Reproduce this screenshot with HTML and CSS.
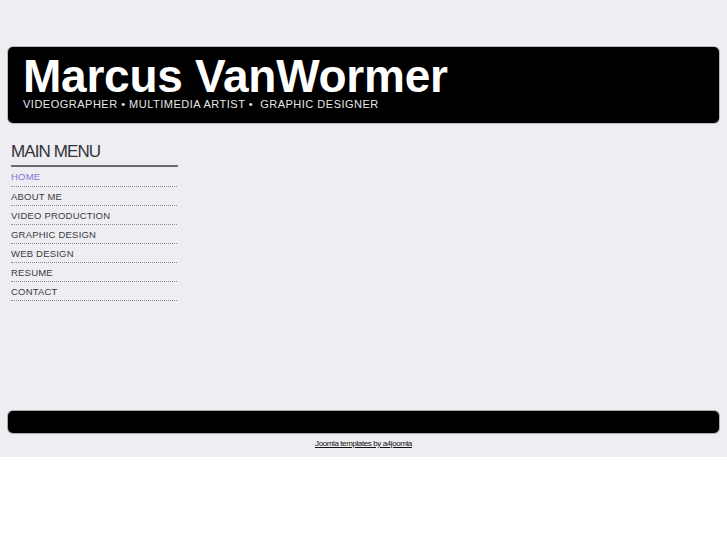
FILE: index.html
```html
<!DOCTYPE html>
<html>
<head>
<meta charset="utf-8">
<link rel="stylesheet" href="styles.css">
</head>
<body>
<div class="page">
  <header class="masthead">
    <h1 class="title">Marcus VanWormer</h1>
    <div class="tagline">VIDEOGRAPHER • MULTIMEDIA ARTIST •&nbsp; GRAPHIC DESIGNER</div>
  </header>
  <main class="main">
    <nav class="menu">
      <h3 class="menu-title">MAIN MENU</h3>
      <ul class="menu-list">
        <li><a class="active" href="#">HOME</a></li>
        <li><a href="#">ABOUT ME</a></li>
        <li><a href="#">VIDEO PRODUCTION</a></li>
        <li><a href="#">GRAPHIC DESIGN</a></li>
        <li><a href="#">WEB DESIGN</a></li>
        <li><a href="#">RESUME</a></li>
        <li><a href="#">CONTACT</a></li>
      </ul>
    </nav>
  </main>
  <footer class="footbar"></footer>
  <div class="credit"><a href="#">Joomla templates by a4joomla</a></div>
</div>
</body>
</html>
```
FILE: styles.css
```css
html, body { margin: 0; padding: 0; background: #ffffff; }
body { font-family: "Liberation Sans", Arial, sans-serif; }
.page {
  background: #eeedf2;
  padding: 47px 8px 0;
  height: 410px;
}
.masthead {
  background: #000;
  border-radius: 5px;
  height: 76px;
  box-sizing: border-box;
  padding: 9px 0 0 15px;
  box-shadow: 0 0 0 1px #b9b9be;
}
.title {
  margin: 0;
  color: #fff;
  font-size: 46px;
  line-height: 40px;
  font-weight: bold;
  letter-spacing: -0.25px;
}
.tagline {
  color: #e6e6e6;
  font-size: 11px;
  line-height: 13px;
  letter-spacing: 0.5px;
  margin-top: 2px;
  white-space: nowrap;
}
.main {
  height: 288px;
  padding-left: 3px;
}
.menu { width: 167px; padding-top: 19px; }
.menu-title {
  margin: 0;
  font-size: 17px;
  font-weight: normal;
  color: #333338;
  letter-spacing: -0.9px;
  line-height: 20px;
  padding-bottom: 3px;
  border-bottom: 2px solid #6b6b70;
}
.menu-list { list-style: none; margin: 0; padding: 0; width: 166px; }
.menu-list li { border-bottom: 1px dotted #8c8c90; height: 18px; }
.menu-list li:first-child { height: 19px; }
.menu-list a {
  display: block;
  font-size: 9.5px;
  letter-spacing: 0.2px;
  color: #3b3b40;
  text-decoration: none;
  line-height: 19px;
}
.menu-list a.active { color: #7b76d8; }
.footbar {
  background: #000;
  height: 22px;
  border-radius: 5px;
  box-shadow: 0 0 0 1px #a9a9ae;
}
.credit { text-align: center; padding-top: 2px; line-height: 12px; }
.credit a { font-size: 8px; color: #111; letter-spacing: -0.4px; }
```
